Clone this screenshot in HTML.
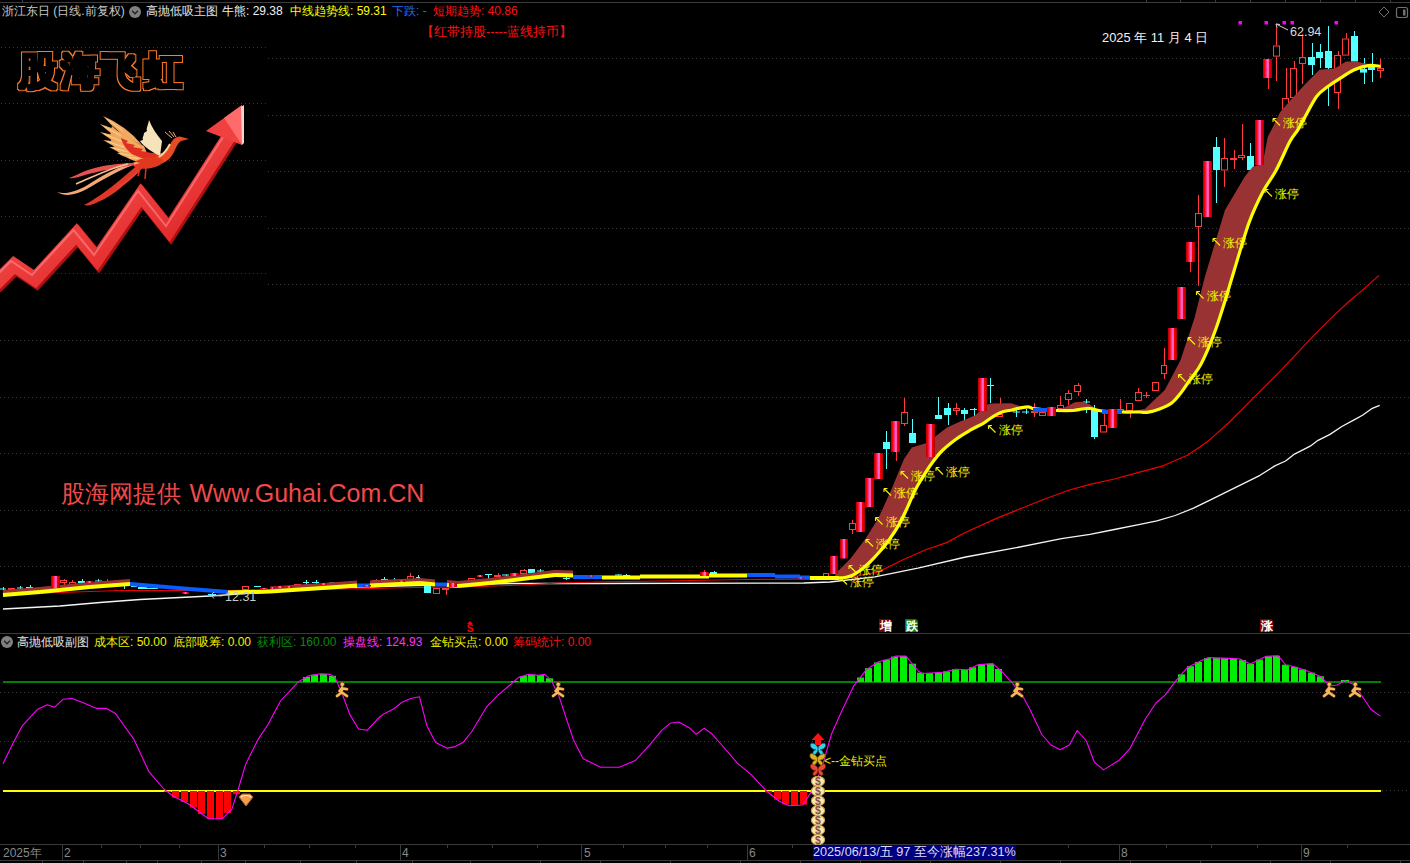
<!DOCTYPE html>
<html><head><meta charset="utf-8">
<style>
html,body{margin:0;padding:0;background:#000;width:1410px;height:863px;overflow:hidden;}
body{position:relative;font-family:"Liberation Sans", sans-serif;}
.t{position:absolute;white-space:nowrap;font-size:12px;line-height:14px;}
svg{position:absolute;left:0;top:0;}
</style></head><body>
<svg width="1410" height="863" viewBox="0 0 1410 863">
<rect x="0" y="2" width="1410" height="1" fill="#3c3c3c"/>
<rect x="22" y="0" width="1" height="2" fill="#3c3c3c"/>
<rect x="1146" y="0" width="1" height="2" fill="#3c3c3c"/>
<rect x="1180" y="0" width="1" height="2" fill="#3c3c3c"/>
<rect x="1215" y="0" width="1" height="2" fill="#3c3c3c"/>
<rect x="1250" y="0" width="1" height="2" fill="#3c3c3c"/>
<rect x="1285" y="0" width="1" height="2" fill="#3c3c3c"/>
<rect x="1320" y="0" width="1" height="2" fill="#3c3c3c"/>
<rect x="1355" y="0" width="1" height="2" fill="#3c3c3c"/>
<rect x="1390" y="0" width="1" height="2" fill="#3c3c3c"/>
<line x1="268" y1="58.5" x2="1410" y2="58.5" stroke="#3a3a3a" stroke-width="1" stroke-dasharray="1 3"/>
<line x1="268" y1="115.5" x2="1410" y2="115.5" stroke="#3a3a3a" stroke-width="1" stroke-dasharray="1 3"/>
<line x1="268" y1="171.5" x2="1410" y2="171.5" stroke="#3a3a3a" stroke-width="1" stroke-dasharray="1 3"/>
<line x1="268" y1="228.5" x2="1410" y2="228.5" stroke="#3a3a3a" stroke-width="1" stroke-dasharray="1 3"/>
<line x1="268" y1="284.5" x2="1410" y2="284.5" stroke="#3a3a3a" stroke-width="1" stroke-dasharray="1 3"/>
<line x1="0" y1="340.5" x2="1410" y2="340.5" stroke="#3a3a3a" stroke-width="1" stroke-dasharray="1 3"/>
<line x1="0" y1="397.5" x2="1410" y2="397.5" stroke="#3a3a3a" stroke-width="1" stroke-dasharray="1 3"/>
<line x1="0" y1="453.5" x2="1410" y2="453.5" stroke="#3a3a3a" stroke-width="1" stroke-dasharray="1 3"/>
<line x1="0" y1="510.5" x2="1410" y2="510.5" stroke="#3a3a3a" stroke-width="1" stroke-dasharray="1 3"/>
<line x1="0" y1="566.5" x2="1410" y2="566.5" stroke="#3a3a3a" stroke-width="1" stroke-dasharray="1 3"/>
<line x1="1" y1="47.5" x2="266" y2="47.5" stroke="#333333" stroke-width="1" stroke-dasharray="1 3"/>
<line x1="1" y1="103.5" x2="266" y2="103.5" stroke="#333333" stroke-width="1" stroke-dasharray="1 3"/>
<line x1="1" y1="160.5" x2="266" y2="160.5" stroke="#333333" stroke-width="1" stroke-dasharray="1 3"/>
<line x1="1" y1="216.5" x2="266" y2="216.5" stroke="#333333" stroke-width="1" stroke-dasharray="1 3"/>
<line x1="1" y1="273.5" x2="266" y2="273.5" stroke="#333333" stroke-width="1" stroke-dasharray="1 3"/>
<rect x="0" y="633" width="1410" height="1" fill="#3a3a3a"/>
<line x1="0" y1="692.5" x2="1410" y2="692.5" stroke="#3a3a3a" stroke-width="1" stroke-dasharray="1 3"/>
<line x1="0" y1="741.5" x2="1410" y2="741.5" stroke="#3a3a3a" stroke-width="1" stroke-dasharray="1 3"/>
<line x1="1382" y1="790.5" x2="1410" y2="790.5" stroke="#3a3a3a" stroke-width="1" stroke-dasharray="1 3"/>
<rect x="3" y="681" width="1378" height="2" fill="#008000"/>
<rect x="3" y="790" width="1378" height="2" fill="#ffff00"/>
<rect x="0" y="844" width="1410" height="1" fill="#3a3a3a"/>
<rect x="0" y="860" width="1410" height="1" fill="#3a3a3a"/>
<rect x="62" y="844" width="1" height="17" fill="#3a3a3a"/>
<rect x="218" y="844" width="1" height="17" fill="#3a3a3a"/>
<rect x="400" y="844" width="1" height="17" fill="#3a3a3a"/>
<rect x="581" y="844" width="1" height="17" fill="#3a3a3a"/>
<rect x="747" y="844" width="1" height="17" fill="#3a3a3a"/>
<rect x="1119" y="844" width="1" height="17" fill="#3a3a3a"/>
<rect x="1301" y="844" width="1" height="17" fill="#3a3a3a"/>
<rect x="140" y="845" width="1" height="3" fill="#3a3a3a"/>
<rect x="179" y="845" width="1" height="3" fill="#3a3a3a"/>
<rect x="264" y="845" width="1" height="3" fill="#3a3a3a"/>
<rect x="309" y="845" width="1" height="3" fill="#3a3a3a"/>
<rect x="355" y="845" width="1" height="3" fill="#3a3a3a"/>
<rect x="447" y="845" width="1" height="3" fill="#3a3a3a"/>
<rect x="492" y="845" width="1" height="3" fill="#3a3a3a"/>
<rect x="537" y="845" width="1" height="3" fill="#3a3a3a"/>
<rect x="623" y="845" width="1" height="3" fill="#3a3a3a"/>
<rect x="665" y="845" width="1" height="3" fill="#3a3a3a"/>
<rect x="707" y="845" width="1" height="3" fill="#3a3a3a"/>
<rect x="792" y="845" width="1" height="3" fill="#3a3a3a"/>
<rect x="1068" y="845" width="1" height="3" fill="#3a3a3a"/>
<rect x="1166" y="845" width="1" height="3" fill="#3a3a3a"/>
<rect x="1211" y="845" width="1" height="3" fill="#3a3a3a"/>
<rect x="1257" y="845" width="1" height="3" fill="#3a3a3a"/>
<rect x="1347" y="845" width="1" height="3" fill="#3a3a3a"/>
<rect x="101" y="845" width="1" height="3" fill="#3a3a3a"/>
<rect x="42" y="861" width="1" height="2" fill="#3a3a3a"/>
<rect x="83" y="861" width="1" height="2" fill="#3a3a3a"/>
<rect x="126" y="861" width="1" height="2" fill="#3a3a3a"/>
<rect x="157" y="861" width="1" height="2" fill="#3a3a3a"/>
<rect x="201" y="861" width="1" height="2" fill="#3a3a3a"/>
<rect x="245" y="861" width="1" height="2" fill="#3a3a3a"/>
<rect x="300" y="861" width="1" height="2" fill="#3a3a3a"/>
<rect x="356" y="861" width="1" height="2" fill="#3a3a3a"/>
<rect x="412" y="861" width="1" height="2" fill="#3a3a3a"/>
<rect x="470" y="861" width="1" height="2" fill="#3a3a3a"/>
<rect x="540" y="861" width="1" height="2" fill="#3a3a3a"/>
<rect x="600" y="861" width="1" height="2" fill="#3a3a3a"/>
<rect x="670" y="861" width="1" height="2" fill="#3a3a3a"/>
<rect x="740" y="861" width="1" height="2" fill="#3a3a3a"/>
<rect x="800" y="861" width="1" height="2" fill="#3a3a3a"/>
<rect x="860" y="861" width="1" height="2" fill="#3a3a3a"/>
<rect x="930" y="861" width="1" height="2" fill="#3a3a3a"/>
<rect x="1000" y="861" width="1" height="2" fill="#3a3a3a"/>
<rect x="1060" y="861" width="1" height="2" fill="#3a3a3a"/>
<rect x="1130" y="861" width="1" height="2" fill="#3a3a3a"/>
<rect x="1200" y="861" width="1" height="2" fill="#3a3a3a"/>
<rect x="1270" y="861" width="1" height="2" fill="#3a3a3a"/>
<rect x="1330" y="861" width="1" height="2" fill="#3a3a3a"/>
<rect x="1400" y="861" width="1" height="2" fill="#3a3a3a"/>
<defs><linearGradient id="lg1" x1="0" y1="0" x2="0" y2="1"><stop offset="0" stop-color="#ff9a60"/><stop offset="1" stop-color="#ff6a00"/></linearGradient><linearGradient id="ag" x1="0" y1="0" x2="1" y2="1"><stop offset="0" stop-color="#ff6060"/><stop offset="1" stop-color="#d81818"/></linearGradient><linearGradient id="pg" x1="0" y1="0" x2="1" y2="0"><stop offset="0" stop-color="#f08040"/><stop offset="0.5" stop-color="#e83a20"/><stop offset="1" stop-color="#f8c080"/></linearGradient></defs>
<filter id="ring" x="-10%" y="-30%" width="120%" height="160%"><feMorphology in="SourceAlpha" operator="dilate" radius="2.6" result="a"/><feMorphology in="SourceAlpha" operator="dilate" radius="1.5" result="b"/><feComposite in="a" in2="b" operator="out" result="r"/><feFlood flood-color="#ff7a2a"/><feComposite in2="r" operator="in"/></filter>
<text x="19" y="84" font-size="38" letter-spacing="3.5" fill="#fff" filter="url(#ring)">股海飞虹</text>
<path d="M-6,285 L14,265 L35,279 L76.5,234 L97,259 L141,195 L169,230 L230,135" fill="none" stroke="#b01010" stroke-width="15" stroke-linejoin="miter" transform="translate(1.5,2)"/>
<path d="M-6,285 L14,265 L35,279 L76.5,234 L97,259 L141,195 L169,230 L230,135" fill="none" stroke="url(#ag)" stroke-width="14" stroke-linejoin="miter"/>
<path d="M-6,285 L14,265 L35,279 L76.5,234 L97,259 L141,195 L169,230 L230,135" fill="none" stroke="#ff8a8a" stroke-width="2" stroke-linejoin="miter" transform="translate(-3,-4)" opacity="0.6"/>
<polygon points="242,105 206,131 242,145" fill="#f04040"/>
<polygon points="242,105 224,118 242,145" fill="#ff6a6a"/>
<polygon points="241,107 242,145 244,143 244,105" fill="#ffd0d0"/>
<g><path d="M112,126 C120,134 132,140 144,146 L150,160 C140,160 128,158 118,152 C112,146 108,138 112,126 Z" fill="#f0a058"/><path d="M103,116 Q118.9,135.3 142,145 Q126.1,125.7 103,116 Z" fill="#f2aa60"/><path d="M106.9,118.9 L122.5,130.5" stroke="#f9d49a" stroke-width="1" fill="none"/><path d="M100,124 Q118.0,141.2 142,148 Q124.0,130.8 100,124 Z" fill="#f2aa60"/><path d="M104.2,126.4 L121.0,136.0" stroke="#f9d49a" stroke-width="1" fill="none"/><path d="M100,132 Q119.1,147.0 143,151 Q123.9,136.0 100,132 Z" fill="#f2aa60"/><path d="M104.3,133.9 L121.5,141.5" stroke="#f9d49a" stroke-width="1" fill="none"/><path d="M103,140 Q122.1,152.7 145,154 Q125.9,141.3 103,140 Z" fill="#f2aa60"/><path d="M107.2,141.4 L124.0,147.0" stroke="#f9d49a" stroke-width="1" fill="none"/><path d="M109,147 Q126.5,157.8 147,157 Q129.5,146.2 109,147 Z" fill="#f2aa60"/><path d="M112.8,148.0 L128.0,152.0" stroke="#f9d49a" stroke-width="1" fill="none"/><path d="M117,153 Q131.9,161.9 149,159 Q134.1,150.1 117,153 Z" fill="#f2aa60"/><path d="M120.2,153.6 L133.0,156.0" stroke="#f9d49a" stroke-width="1" fill="none"/><path d="M126,157 Q137.8,164.5 151,160 Q139.2,152.5 126,157 Z" fill="#f2aa60"/><path d="M128.5,157.3 L138.5,158.5" stroke="#f9d49a" stroke-width="1" fill="none"/><path d="M121,138 L128,141 L126,143 L135,145 L133,147 L143,149 L141,151 L152,153 L163,153 L161,161 C150,161 140,158 132,154 C127,150 123,145 121,138 Z" fill="#e22e20"/><path d="M149,120 C148,126 146,128 147,131 L144,133 C144,136 142,137 143,140 L140,141 C144,147 152,152 160,156 L162,141 C157,135 152,128 149,120 Z" fill="#f7e3ba"/><path d="M155,157 C164,155 168,150 170,145 C172,140 175,137 180,136.5 L189,139 L181,141 C178,143 176,147 174,152 C170,160 164,164 154,166 Z" fill="#e84a22"/><path d="M159,157 C165,153 168,148 170,144" stroke="#f8d8a0" stroke-width="2" fill="none"/><path d="M172,138 L165,132 M174,137 L169,131 M176,137 L173,132" stroke="#f0b070" stroke-width="1" fill="none"/><ellipse cx="148" cy="163" rx="15" ry="5.5" transform="rotate(-8 148 163)" fill="#e03a1e"/><path d="M140,163 C120,168 100,182 85,190 C75,195 65,197 57,192 C66,195 76,191 86,186 C102,176 118,166 136,162 Z" fill="#f4a878"/><path d="M134,165 C115,168 100,171 85,175 C78,177 73,179 69,178 C75,176 82,172 88,170 C104,165 120,163 134,163 Z" fill="#e85050"/><path d="M142,167 C130,180 114,196 98,202 C92,205 88,206 84,205 C94,200 108,190 120,180 C128,173 134,168 138,165 Z" fill="#e03828"/><path d="M141,168 C134,176 126,183 116,188" stroke="#e84030" stroke-width="2" fill="none"/><path d="M128,164 C110,168 95,176 76,184" stroke="#f6c090" stroke-width="1.6" fill="none"/><path d="M140,168 L138,176 M146,168 L145,179" stroke="#e03020" stroke-width="1.5" fill="none"/></g>
<defs><linearGradient id="rg" x1="0" x2="1" y1="0" y2="0"><stop offset="0" stop-color="#b00000"/><stop offset="0.2" stop-color="#ff0000"/><stop offset="0.38" stop-color="#ff3080"/><stop offset="0.45" stop-color="#ff66cc"/><stop offset="0.6" stop-color="#ff66cc"/><stop offset="0.7" stop-color="#ff0000"/><stop offset="1" stop-color="#a00000"/></linearGradient></defs>
<polyline points="3.0,609.0 60.0,606.0 100.0,602.5 140.0,599.5 210.0,596.0 330.0,588.0 415.0,585.5 510.0,583.5 596.0,583.5 804.0,583.0 830.0,582.0 874.8,576.9 917.9,568.1 965.7,557.0 1013.6,548.2 1061.5,538.6 1090.0,534.3 1114.3,529.5 1138.7,524.6 1156.9,520.9 1175.2,515.5 1193.5,508.2 1211.5,499.4 1260.0,475.3 1274.8,465.9 1285.6,461.0 1294.5,454.1 1310.2,446.2 1318.1,440.3 1330.0,434.4 1341.8,426.5 1353.6,420.1 1362.5,415.2 1372.3,408.3 1379.7,405.3" fill="none" stroke="#f4f4f4" stroke-width="1.3" stroke-linejoin="round"/>
<polyline points="3.0,594.0 60.0,592.5 120.0,590.5 228.0,590.5 310.0,589.5 370.0,588.5 415.0,587.5 460.0,587.0 510.0,585.5 560.0,583.0 596.0,582.0 690.0,580.5 744.0,579.5 840.0,579.0 878.0,572.1 901.9,560.2 925.8,549.8 946.6,542.6 965.7,532.2 997.7,517.9 1021.6,508.3 1045.5,498.7 1069.5,490.0 1090.0,484.4 1114.3,479.0 1138.7,472.3 1163.0,465.8 1187.4,455.2 1199.5,447.3 1208.7,440.6 1229.0,422.5 1255.0,396.4 1280.0,371.4 1313.4,335.9 1332.2,317.1 1348.9,301.5 1361.4,291.1 1379.1,275.4" fill="none" stroke="#f00000" stroke-width="1.2" stroke-linejoin="round"/>
<rect x="852" y="520" width="1" height="3" fill="#ff3c3c"/><rect x="852" y="530" width="1" height="4" fill="#ff3c3c"/><rect x="849.5" y="523.5" width="6" height="6" fill="none" stroke="#ff3c3c" stroke-width="1"/>
<rect x="886" y="431" width="1" height="38" fill="#54ffff"/><rect x="883" y="442" width="7" height="7" fill="#54ffff"/>
<rect x="904" y="398" width="1" height="14" fill="#ff3c3c"/><rect x="904" y="424" width="1" height="2" fill="#ff3c3c"/><rect x="901.5" y="412.5" width="6" height="11" fill="none" stroke="#ff3c3c" stroke-width="1"/>
<rect x="912" y="419" width="1" height="24" fill="#54ffff"/><rect x="909" y="433" width="7" height="10" fill="#54ffff"/>
<rect x="938" y="397" width="1" height="22" fill="#54ffff"/><rect x="935" y="415" width="7" height="4" fill="#54ffff"/>
<rect x="948" y="403" width="1" height="22" fill="#54ffff"/><rect x="944" y="408" width="7" height="7" fill="#54ffff"/>
<rect x="956" y="403" width="1" height="5" fill="#ff3c3c"/><rect x="956" y="411" width="1" height="4" fill="#ff3c3c"/><rect x="953.5" y="408.5" width="6" height="2" fill="none" stroke="#ff3c3c" stroke-width="1"/>
<rect x="964" y="408" width="1" height="13" fill="#54ffff"/><rect x="961" y="410" width="7" height="4" fill="#54ffff"/>
<rect x="974" y="408" width="1" height="8" fill="#54ffff"/><rect x="970" y="409" width="7" height="1" fill="#54ffff"/>
<rect x="990" y="378" width="1" height="25" fill="#54ffff"/><rect x="987" y="385" width="7" height="1" fill="#54ffff"/>
<rect x="1000" y="398" width="1" height="16" fill="#ff3c3c"/><rect x="996.5" y="414.5" width="6" height="2" fill="none" stroke="#ff3c3c" stroke-width="1"/>
<rect x="1016" y="410" width="1" height="7" fill="#54ffff"/><rect x="1013" y="411.5" width="7" height="1" fill="#54ffff"/>
<rect x="1026" y="409" width="1" height="5" fill="#54ffff"/><rect x="1022" y="411.5" width="7" height="1" fill="#54ffff"/>
<rect x="1034" y="403" width="1" height="8" fill="#ff3c3c"/><rect x="1034" y="413" width="1" height="4" fill="#ff3c3c"/><rect x="1031" y="411" width="7" height="2" fill="#ff3c3c"/>
<rect x="1039.5" y="412.5" width="6" height="3" fill="none" stroke="#ff3c3c" stroke-width="1"/>
<rect x="1060" y="396" width="1" height="9" fill="#ff3c3c"/><rect x="1057.5" y="405.5" width="6" height="3" fill="none" stroke="#ff3c3c" stroke-width="1"/>
<rect x="1068" y="390" width="1" height="3" fill="#ff3c3c"/><rect x="1068" y="400" width="1" height="5" fill="#ff3c3c"/><rect x="1065.5" y="393.5" width="6" height="6" fill="none" stroke="#ff3c3c" stroke-width="1"/>
<rect x="1078" y="383" width="1" height="2" fill="#ff3c3c"/><rect x="1078" y="392" width="1" height="4" fill="#ff3c3c"/><rect x="1074.5" y="385.5" width="6" height="6" fill="none" stroke="#ff3c3c" stroke-width="1"/>
<rect x="1086" y="399" width="1" height="14" fill="#54ffff"/><rect x="1083" y="401.5" width="7" height="1" fill="#54ffff"/>
<rect x="1094" y="405" width="1" height="34" fill="#54ffff"/><rect x="1091" y="410" width="7" height="27" fill="#54ffff"/>
<rect x="1104" y="412" width="1" height="13" fill="#ff3c3c"/><rect x="1100.5" y="425.5" width="6" height="6.5" fill="none" stroke="#ff3c3c" stroke-width="1"/>
<rect x="1120" y="399" width="1" height="10" fill="#ff3c3c"/><rect x="1120" y="412" width="1" height="2" fill="#ff3c3c"/><rect x="1117.5" y="409.5" width="6" height="2" fill="none" stroke="#ff3c3c" stroke-width="1"/>
<rect x="1130" y="411" width="1" height="7" fill="#ff3c3c"/><rect x="1126.5" y="403.5" width="6" height="7" fill="none" stroke="#ff3c3c" stroke-width="1"/>
<rect x="1138" y="388" width="1" height="4" fill="#ff3c3c"/><rect x="1135.5" y="392.5" width="6" height="8" fill="none" stroke="#ff3c3c" stroke-width="1"/>
<rect x="1146" y="392" width="1" height="3" fill="#ff3c3c"/><rect x="1146" y="396" width="1" height="2" fill="#ff3c3c"/><rect x="1143" y="395" width="7" height="1" fill="#ff3c3c"/>
<rect x="1152.5" y="382.5" width="6" height="8" fill="none" stroke="#ff3c3c" stroke-width="1"/>
<rect x="1164" y="348" width="1" height="17" fill="#ff3c3c"/><rect x="1164" y="374" width="1" height="5" fill="#ff3c3c"/><rect x="1161.5" y="365.5" width="5" height="8" fill="none" stroke="#ff3c3c" stroke-width="1"/>
<rect x="1198" y="195" width="1" height="18" fill="#ff3c3c"/><rect x="1198" y="227" width="1" height="59" fill="#ff3c3c"/><rect x="1195.5" y="213.5" width="6" height="13" fill="none" stroke="#ff3c3c" stroke-width="1"/>
<rect x="1216" y="137" width="1" height="66" fill="#54ffff"/><rect x="1213" y="147" width="7" height="23" fill="#54ffff"/>
<rect x="1224" y="138" width="1" height="20" fill="#ff3c3c"/><rect x="1224" y="170.5" width="1" height="16.5" fill="#ff3c3c"/><rect x="1221.5" y="158.5" width="6" height="11.5" fill="none" stroke="#ff3c3c" stroke-width="1"/>
<rect x="1234" y="150" width="1" height="8" fill="#ff3c3c"/><rect x="1234" y="160" width="1" height="9" fill="#ff3c3c"/><rect x="1230" y="158" width="7" height="2" fill="#ff3c3c"/>
<rect x="1242" y="124" width="1" height="31" fill="#ff3c3c"/><rect x="1242" y="158" width="1" height="2" fill="#ff3c3c"/><rect x="1238.5" y="155.5" width="6" height="2" fill="none" stroke="#ff3c3c" stroke-width="1"/>
<rect x="1250" y="143" width="1" height="27" fill="#54ffff"/><rect x="1247" y="156" width="7" height="14" fill="#54ffff"/>
<rect x="1276" y="28" width="1" height="17.5" fill="#ff3c3c"/><rect x="1276" y="56.6" width="1" height="24.4" fill="#ff3c3c"/><rect x="1273.5" y="46.0" width="6" height="10.100000000000001" fill="none" stroke="#ff3c3c" stroke-width="1"/>
<rect x="1286" y="68" width="1" height="30" fill="#ff3c3c"/><rect x="1282.5" y="98.5" width="6" height="10" fill="none" stroke="#ff3c3c" stroke-width="1"/>
<rect x="1294" y="61" width="1" height="7" fill="#ff3c3c"/><rect x="1290.5" y="68.5" width="6" height="29" fill="none" stroke="#ff3c3c" stroke-width="1"/>
<rect x="1302" y="34" width="1" height="23" fill="#ff3c3c"/><rect x="1302" y="64" width="1" height="20" fill="#ff3c3c"/><rect x="1299.5" y="57.5" width="6" height="6" fill="none" stroke="#ff3c3c" stroke-width="1"/>
<rect x="1312" y="43" width="1" height="32" fill="#54ffff"/><rect x="1308" y="57" width="7" height="8" fill="#54ffff"/>
<rect x="1320" y="44" width="1" height="24" fill="#54ffff"/><rect x="1316" y="52" width="7" height="6" fill="#54ffff"/>
<rect x="1328" y="26" width="1" height="80" fill="#54ffff"/><rect x="1325" y="51" width="7" height="17" fill="#54ffff"/>
<rect x="1338" y="51" width="1" height="4" fill="#ff3c3c"/><rect x="1338" y="93" width="1" height="16" fill="#ff3c3c"/><rect x="1334.5" y="55.5" width="6" height="37" fill="none" stroke="#ff3c3c" stroke-width="1"/>
<rect x="1346" y="33" width="1" height="5.5" fill="#ff3c3c"/><rect x="1342.5" y="39.0" width="6" height="16.1" fill="none" stroke="#ff3c3c" stroke-width="1"/>
<rect x="1354" y="31" width="1" height="30.5" fill="#54ffff"/><rect x="1351" y="36" width="7" height="25.5" fill="#54ffff"/>
<rect x="1364" y="58" width="1" height="26" fill="#54ffff"/><rect x="1360" y="69" width="7" height="3.5999999999999943" fill="#54ffff"/>
<rect x="1372" y="53" width="1" height="29" fill="#54ffff"/><rect x="1368" y="67" width="7" height="3" fill="#54ffff"/>
<rect x="1380" y="58.7" width="1" height="9.299999999999997" fill="#ff3c3c"/><rect x="1380" y="71" width="1" height="7" fill="#ff3c3c"/><rect x="1377.5" y="68.5" width="6" height="2" fill="none" stroke="#ff3c3c" stroke-width="1"/>
<rect x="3" y="587" width="1" height="5" fill="#54ffff"/><rect x="0" y="588.5" width="6" height="1" fill="#54ffff"/>
<rect x="8" y="588" width="7" height="2" fill="#ff3c3c"/>
<rect x="20" y="586" width="1" height="3" fill="#54ffff"/><rect x="17" y="587.5" width="6" height="1" fill="#54ffff"/>
<rect x="30" y="585" width="1" height="4" fill="#54ffff"/><rect x="26" y="587" width="7" height="1" fill="#54ffff"/>
<rect x="64" y="579" width="1" height="1" fill="#ff3c3c"/><rect x="64" y="583" width="1" height="2" fill="#ff3c3c"/><rect x="60.5" y="580.5" width="6" height="2" fill="none" stroke="#ff3c3c" stroke-width="1"/>
<rect x="72" y="580" width="1" height="2" fill="#ff3c3c"/><rect x="69.5" y="582.5" width="6" height="2" fill="none" stroke="#ff3c3c" stroke-width="1"/>
<rect x="82" y="579" width="1" height="4" fill="#54ffff"/><rect x="78" y="581" width="7" height="2" fill="#54ffff"/>
<rect x="98" y="579" width="1" height="4" fill="#54ffff"/><rect x="95" y="580.5" width="7" height="1" fill="#54ffff"/>
<rect x="107" y="579" width="1" height="2" fill="#ff3c3c"/><rect x="104" y="581" width="6" height="1" fill="#ff3c3c"/>
<rect x="116" y="581" width="1" height="1" fill="#54ffff"/><rect x="112" y="581" width="7" height="1" fill="#54ffff"/>
<rect x="124" y="585" width="1" height="4" fill="#54ffff"/><rect x="121" y="585" width="7" height="1" fill="#54ffff"/>
<rect x="134" y="586" width="1" height="1" fill="#54ffff"/><rect x="131" y="586" width="6" height="1" fill="#54ffff"/>
<rect x="142" y="587" width="1" height="2" fill="#54ffff"/><rect x="138" y="587" width="9" height="2" fill="#54ffff"/>
<rect x="152" y="588" width="1" height="1" fill="#54ffff"/><rect x="147" y="588" width="11" height="1" fill="#54ffff"/>
<rect x="212" y="594" width="1" height="1" fill="#54ffff"/><rect x="208" y="594" width="8" height="1" fill="#54ffff"/>
<rect x="242.5" y="586.5" width="6" height="3" fill="none" stroke="#ff3c3c" stroke-width="1"/>
<rect x="258" y="586" width="1" height="1" fill="#54ffff"/><rect x="254" y="586" width="7" height="1" fill="#54ffff"/>
<rect x="294.5" y="584.5" width="6" height="2" fill="none" stroke="#ff3c3c" stroke-width="1"/>
<rect x="306" y="580" width="1" height="6" fill="#54ffff"/><rect x="303" y="582" width="6" height="1" fill="#54ffff"/>
<rect x="316" y="580" width="1" height="6" fill="#54ffff"/><rect x="312" y="582" width="7" height="1" fill="#54ffff"/>
<rect x="332" y="582.5" width="1" height="1" fill="#54ffff"/><rect x="329" y="582.5" width="6" height="1" fill="#54ffff"/>
<rect x="342" y="583" width="1" height="1" fill="#54ffff"/><rect x="338" y="583" width="7" height="1" fill="#54ffff"/>
<rect x="376" y="579" width="1" height="1" fill="#ff3c3c"/><rect x="372.5" y="580.5" width="6" height="4" fill="none" stroke="#ff3c3c" stroke-width="1"/>
<rect x="384" y="577" width="1" height="5" fill="#54ffff"/><rect x="381" y="579" width="7" height="1" fill="#54ffff"/>
<rect x="394" y="578" width="1" height="5" fill="#54ffff"/><rect x="390" y="580" width="7" height="1" fill="#54ffff"/>
<rect x="410" y="573" width="1" height="3" fill="#ff3c3c"/><rect x="407.5" y="576.5" width="6" height="3.5" fill="none" stroke="#ff3c3c" stroke-width="1"/>
<rect x="418" y="575" width="1" height="4" fill="#54ffff"/><rect x="416" y="577" width="4" height="1" fill="#54ffff"/>
<rect x="428" y="586" width="1" height="7" fill="#54ffff"/><rect x="424" y="586" width="7" height="7" fill="#54ffff"/>
<rect x="433.5" y="588.5" width="6" height="5" fill="none" stroke="#ff3c3c" stroke-width="1"/>
<rect x="446" y="590" width="1" height="5" fill="#ff3c3c"/><rect x="442" y="588" width="7" height="2" fill="#ff3c3c"/>
<rect x="459" y="582.5" width="7" height="1.5" fill="#ff3c3c"/>
<rect x="468.5" y="578.5" width="6" height="3" fill="none" stroke="#ff3c3c" stroke-width="1"/>
<rect x="488" y="574" width="1" height="6" fill="#54ffff"/><rect x="485" y="574" width="7" height="1" fill="#54ffff"/>
<rect x="498" y="573" width="1" height="2" fill="#ff3c3c"/><rect x="494" y="575" width="7" height="2" fill="#ff3c3c"/>
<rect x="506" y="574.5" width="1" height="2.5" fill="#54ffff"/><rect x="502" y="574.5" width="7" height="1" fill="#54ffff"/>
<rect x="524" y="569" width="1" height="1" fill="#ff3c3c"/><rect x="520.5" y="570.5" width="6" height="3" fill="none" stroke="#ff3c3c" stroke-width="1"/>
<rect x="532" y="569" width="1" height="4" fill="#54ffff"/><rect x="528" y="569" width="7" height="4" fill="#54ffff"/>
<rect x="540" y="569" width="1" height="4" fill="#54ffff"/><rect x="537" y="570.5" width="7" height="1" fill="#54ffff"/>
<rect x="556" y="576" width="1" height="1" fill="#54ffff"/><rect x="553" y="576" width="7" height="1" fill="#54ffff"/>
<rect x="558" y="575.5" width="1" height="1" fill="#54ffff"/><rect x="554" y="575.5" width="7" height="1" fill="#54ffff"/>
<rect x="566" y="576" width="1" height="4" fill="#54ffff"/><rect x="563" y="578" width="7" height="1" fill="#54ffff"/>
<rect x="618" y="574.5" width="1" height="1" fill="#54ffff"/><rect x="615" y="574.5" width="7" height="1" fill="#54ffff"/>
<rect x="626" y="574" width="1" height="2" fill="#54ffff"/><rect x="623" y="575" width="7" height="1" fill="#54ffff"/>
<rect x="714" y="571" width="1" height="3" fill="#54ffff"/><rect x="710" y="572" width="7" height="2" fill="#54ffff"/>
<rect x="823.5" y="573.5" width="5" height="3" fill="none" stroke="#ff3c3c" stroke-width="1"/>
<polygon points="3,590 40,587 40,592 3,595" fill="#993333"/>
<polygon points="40,587 90,582 90,587 40,592" fill="#993333"/>
<polygon points="90,582 130,579 130,584 90,587" fill="#993333"/>
<polygon points="270,586.5 300,584.5 300,589.5 270,591.5" fill="#993333"/>
<polygon points="300,584.5 330,582.5 330,587.5 300,589.5" fill="#993333"/>
<polygon points="330,582.5 357,580.5 357,585.5 330,587.5" fill="#993333"/>
<polygon points="370,580.5 420,578 420,583 370,585.5" fill="#993333"/>
<polygon points="420,578 435,579.5 435,584.5 420,583" fill="#993333"/>
<polygon points="447,580 458,581 458,586 447,585" fill="#993333"/>
<polygon points="458,581 490,578 490,583 458,586" fill="#993333"/>
<polygon points="490,578 530,573 530,578 490,583" fill="#993333"/>
<polygon points="530,573 555,570 555,575 530,578" fill="#993333"/>
<polygon points="555,570 573,570.5 573,575.5 555,575" fill="#993333"/>
<polygon points="835.3,573.8 850.6,558.5 866.0,538.0 878.6,517.7 891.4,489.6 904.0,459.0 911.8,447.6 925.8,443.2 935.0,436.7 947.0,427.5 959.0,421.9 975.0,415.4 987.0,404.8 990.6,403.4 1011.3,403.3 1019.8,406.0 1026.2,407.6 1030.0,407.0 1030.0,407.4 1029.0,407.0 1022.0,407.6 1011.0,410.2 1002.7,411.7 993.4,416.3 984.1,422.8 970.2,430.2 956.3,439.0 942.4,450.5 932.4,462.5 922.6,477.3 914.7,491.0 906.8,508.8 899.0,524.6 889.0,540.0 879.3,552.0 869.0,563.0 859.5,571.0 852.0,575.5 845.0,577.5 839.0,578.0 835.3,578.0" fill="#993333"/>
<polygon points="1056.0,410.5 1064.5,407.6 1075.0,402.2 1082.6,401.7 1090.0,404.4 1094.0,407.6 1096.0,408.6 1096.0,409.8 1090.0,408.5 1082.0,409.0 1073.0,410.5 1056.0,410.5 1056.0,410.5" fill="#993333"/>
<polygon points="1128.0,412.0 1133.6,410.7 1144.8,409.0 1164.8,390.0 1180.4,360.4 1194.3,318.7 1204.8,277.0 1224.9,210.2 1244.7,176.8 1253.0,166.4 1262.5,164.3 1267.7,137.0 1272.3,128.2 1280.2,112.0 1290.3,100.4 1305.6,83.7 1319.5,69.8 1334.8,68.4 1346.0,61.5 1355.7,61.5 1365.4,63.5 1380.7,65.6 1380.7,66.3 1380.7,66.3 1368.2,65.6 1354.3,69.8 1340.4,78.2 1327.9,86.5 1316.8,96.2 1305.6,115.7 1298.0,129.6 1290.0,141.3 1276.0,170.5 1262.5,192.5 1249.0,222.7 1234.3,270.0 1225.7,298.7 1217.0,325.7 1208.3,348.3 1199.6,366.5 1189.0,381.3 1180.4,393.5 1171.7,403.0 1159.6,409.0 1147.0,412.3 1140.0,412.0 1128.0,412.0" fill="#993333"/>
<line x1="3" y1="595" x2="40" y2="592" stroke="#ffff00" stroke-width="4"/>
<line x1="40" y1="592" x2="90" y2="587" stroke="#ffff00" stroke-width="4"/>
<line x1="90" y1="587" x2="130" y2="584" stroke="#ffff00" stroke-width="4"/>
<line x1="130" y1="584" x2="160" y2="586.5" stroke="#0a5cff" stroke-width="4"/>
<line x1="160" y1="586.5" x2="190" y2="589" stroke="#0a5cff" stroke-width="4"/>
<line x1="190" y1="589" x2="228" y2="592" stroke="#0a5cff" stroke-width="4"/>
<line x1="228" y1="592.5" x2="270" y2="591.5" stroke="#ffff00" stroke-width="4"/>
<line x1="270" y1="591.5" x2="300" y2="589.5" stroke="#ffff00" stroke-width="4"/>
<line x1="300" y1="589.5" x2="330" y2="587.5" stroke="#ffff00" stroke-width="4"/>
<line x1="330" y1="587.5" x2="357" y2="585.5" stroke="#ffff00" stroke-width="4"/>
<line x1="357" y1="585.5" x2="370" y2="585.5" stroke="#0a5cff" stroke-width="4"/>
<line x1="370" y1="585.5" x2="420" y2="583" stroke="#ffff00" stroke-width="4"/>
<line x1="420" y1="583" x2="435" y2="584.5" stroke="#ffff00" stroke-width="4"/>
<line x1="435" y1="584.5" x2="447" y2="584.5" stroke="#0a5cff" stroke-width="4"/>
<line x1="447" y1="585" x2="458" y2="586" stroke="#ffff00" stroke-width="4"/>
<line x1="458" y1="586" x2="490" y2="583" stroke="#ffff00" stroke-width="4"/>
<line x1="490" y1="583" x2="530" y2="578" stroke="#ffff00" stroke-width="4"/>
<line x1="530" y1="578" x2="555" y2="575" stroke="#ffff00" stroke-width="4"/>
<line x1="555" y1="575" x2="573" y2="575.5" stroke="#ffff00" stroke-width="4"/>
<line x1="573" y1="577" x2="602" y2="577" stroke="#0a5cff" stroke-width="4"/>
<line x1="602" y1="577.5" x2="640" y2="577.5" stroke="#ffff00" stroke-width="4"/>
<line x1="640" y1="576.5" x2="709" y2="576.5" stroke="#ffff00" stroke-width="4"/>
<line x1="709" y1="575.5" x2="747" y2="575.5" stroke="#ffff00" stroke-width="4"/>
<line x1="747" y1="575" x2="775" y2="575" stroke="#0a5cff" stroke-width="4"/>
<line x1="775" y1="576.5" x2="800" y2="576.5" stroke="#0a5cff" stroke-width="4"/>
<line x1="800" y1="577.5" x2="810" y2="577.5" stroke="#0a5cff" stroke-width="4"/>
<line x1="810" y1="578" x2="839" y2="578" stroke="#ffff00" stroke-width="4"/>
<path d="M840,577.5 L847,584.5 M840,577.5 L840,581 M840,577.5 L843.5,577.5" stroke="#f4f400" stroke-width="1.1" fill="none"/>
<text x="850" y="585.5" font-size="12" fill="#f4f400">涨停</text>
<path d="M849,565.5 L856,572.5 M849,565.5 L849,569 M849,565.5 L852.5,565.5" stroke="#f4f400" stroke-width="1.1" fill="none"/>
<text x="859" y="573.5" font-size="12" fill="#f4f400">涨停</text>
<path d="M866,539.5 L873,546.5 M866,539.5 L866,543 M866,539.5 L869.5,539.5" stroke="#f4f400" stroke-width="1.1" fill="none"/>
<text x="876" y="547.5" font-size="12" fill="#f4f400">涨停</text>
<path d="M875.5,517.5 L882.5,524.5 M875.5,517.5 L875.5,521 M875.5,517.5 L879.0,517.5" stroke="#f4f400" stroke-width="1.1" fill="none"/>
<text x="885.5" y="525.5" font-size="12" fill="#f4f400">涨停</text>
<path d="M884,488.5 L891,495.5 M884,488.5 L884,492 M884,488.5 L887.5,488.5" stroke="#f4f400" stroke-width="1.1" fill="none"/>
<text x="894" y="496.5" font-size="12" fill="#f4f400">涨停</text>
<path d="M901,471.5 L908,478.5 M901,471.5 L901,475 M901,471.5 L904.5,471.5" stroke="#f4f400" stroke-width="1.1" fill="none"/>
<text x="911" y="479.5" font-size="12" fill="#f4f400">涨停</text>
<path d="M936,467.5 L943,474.5 M936,467.5 L936,471 M936,467.5 L939.5,467.5" stroke="#f4f400" stroke-width="1.1" fill="none"/>
<text x="946" y="475.5" font-size="12" fill="#f4f400">涨停</text>
<path d="M988.5,425.5 L995.5,432.5 M988.5,425.5 L988.5,429 M988.5,425.5 L992.0,425.5" stroke="#f4f400" stroke-width="1.1" fill="none"/>
<text x="998.5" y="433.5" font-size="12" fill="#f4f400">涨停</text>
<path d="M1178.5,374.5 L1185.5,381.5 M1178.5,374.5 L1178.5,378 M1178.5,374.5 L1182.0,374.5" stroke="#f4f400" stroke-width="1.1" fill="none"/>
<text x="1188.5" y="382.5" font-size="12" fill="#f4f400">涨停</text>
<path d="M1188,337.5 L1195,344.5 M1188,337.5 L1188,341 M1188,337.5 L1191.5,337.5" stroke="#f4f400" stroke-width="1.1" fill="none"/>
<text x="1198" y="345.5" font-size="12" fill="#f4f400">涨停</text>
<path d="M1196.5,291.5 L1203.5,298.5 M1196.5,291.5 L1196.5,295 M1196.5,291.5 L1200.0,291.5" stroke="#f4f400" stroke-width="1.1" fill="none"/>
<text x="1206.5" y="299.5" font-size="12" fill="#f4f400">涨停</text>
<path d="M1213,238.5 L1220,245.5 M1213,238.5 L1213,242 M1213,238.5 L1216.5,238.5" stroke="#f4f400" stroke-width="1.1" fill="none"/>
<text x="1223" y="246.5" font-size="12" fill="#f4f400">涨停</text>
<path d="M1265,189.5 L1272,196.5 M1265,189.5 L1265,193 M1265,189.5 L1268.5,189.5" stroke="#f4f400" stroke-width="1.1" fill="none"/>
<text x="1275" y="197.5" font-size="12" fill="#f4f400">涨停</text>
<path d="M1273,118.5 L1280,125.5 M1273,118.5 L1273,122 M1273,118.5 L1276.5,118.5" stroke="#f4f400" stroke-width="1.1" fill="none"/>
<text x="1283" y="126.5" font-size="12" fill="#f4f400">涨停</text>
<path d="M839.0,578.0 C840.0,577.9 842.8,577.9 845.0,577.5 C847.2,577.1 849.6,576.6 852.0,575.5 C854.4,574.4 856.7,573.1 859.5,571.0 C862.3,568.9 865.7,566.2 869.0,563.0 C872.3,559.8 876.0,555.8 879.3,552.0 C882.6,548.2 885.7,544.6 889.0,540.0 C892.3,535.4 896.0,529.8 899.0,524.6 C902.0,519.4 904.2,514.4 906.8,508.8 C909.4,503.2 912.1,496.2 914.7,491.0 C917.3,485.8 919.7,482.1 922.6,477.3 C925.5,472.6 929.1,467.0 932.4,462.5 C935.7,458.0 938.4,454.4 942.4,450.5 C946.4,446.6 951.7,442.4 956.3,439.0 C960.9,435.6 965.6,432.9 970.2,430.2 C974.8,427.5 980.2,425.1 984.1,422.8 C988.0,420.5 990.3,418.2 993.4,416.3 C996.5,414.4 999.8,412.7 1002.7,411.7 C1005.6,410.7 1007.8,410.9 1011.0,410.2 C1014.2,409.5 1019.0,408.1 1022.0,407.6 C1025.0,407.1 1027.2,406.8 1029.0,407.0 C1030.8,407.2 1030.0,408.1 1033.0,408.6 C1036.0,409.1 1043.2,409.7 1047.0,410.0 C1050.8,410.3 1051.7,410.4 1056.0,410.5 C1060.3,410.6 1068.7,410.8 1073.0,410.5 C1077.3,410.2 1079.2,409.3 1082.0,409.0 C1084.8,408.7 1086.7,408.2 1090.0,408.5 C1093.3,408.8 1096.7,410.4 1102.0,411.0 C1107.3,411.6 1115.7,411.8 1122.0,412.0 C1128.3,412.2 1135.8,411.9 1140.0,412.0 C1144.2,412.1 1143.7,412.8 1147.0,412.3 C1150.3,411.8 1155.5,410.6 1159.6,409.0 C1163.7,407.4 1168.2,405.6 1171.7,403.0 C1175.2,400.4 1177.5,397.1 1180.4,393.5 C1183.3,389.9 1185.8,385.8 1189.0,381.3 C1192.2,376.8 1196.4,372.0 1199.6,366.5 C1202.8,361.0 1205.4,355.1 1208.3,348.3 C1211.2,341.5 1214.1,334.0 1217.0,325.7 C1219.9,317.4 1222.8,308.0 1225.7,298.7 C1228.6,289.4 1230.4,282.7 1234.3,270.0 C1238.2,257.3 1244.3,235.6 1249.0,222.7 C1253.7,209.8 1258.0,201.2 1262.5,192.5 C1267.0,183.8 1271.4,179.0 1276.0,170.5 C1280.6,162.0 1286.3,148.1 1290.0,141.3 C1293.7,134.5 1295.4,133.9 1298.0,129.6 C1300.6,125.3 1302.5,121.3 1305.6,115.7 C1308.7,110.1 1313.1,101.1 1316.8,96.2 C1320.5,91.3 1324.0,89.5 1327.9,86.5 C1331.8,83.5 1336.0,81.0 1340.4,78.2 C1344.8,75.4 1349.7,71.9 1354.3,69.8 C1358.9,67.7 1363.8,66.2 1368.2,65.6 C1372.6,65.0 1378.6,66.2 1380.7,66.3" fill="none" stroke="#ffff00" stroke-width="3.2"/>
<rect x="1033" y="408" width="14" height="4" fill="#0a5cff"/>
<rect x="1102" y="410" width="6" height="4" fill="#0a5cff"/>
<rect x="1117" y="410" width="5" height="4" fill="#0a5cff"/>
<rect x="830" y="556" width="8" height="18" fill="url(#rg)"/>
<rect x="840" y="539" width="8" height="19.5" fill="url(#rg)"/>
<rect x="856" y="502" width="9" height="30" fill="url(#rg)"/>
<rect x="865" y="478" width="9" height="29" fill="url(#rg)"/>
<rect x="874" y="453" width="9" height="26" fill="url(#rg)"/>
<rect x="896" y="452" width="1" height="9" fill="#ff3030"/><rect x="891" y="421" width="9" height="31" fill="url(#rg)"/>
<rect x="926" y="424" width="9" height="33" fill="url(#rg)"/>
<rect x="978" y="378" width="9" height="33" fill="url(#rg)"/>
<rect x="1047" y="407" width="9" height="9" fill="url(#rg)"/>
<rect x="1108" y="409" width="9" height="19" fill="url(#rg)"/>
<rect x="1168" y="328" width="9" height="32" fill="url(#rg)"/>
<rect x="1177" y="287" width="9" height="32" fill="url(#rg)"/>
<rect x="1190" y="262" width="1" height="10" fill="#ff3030"/><rect x="1186" y="242" width="9" height="20" fill="url(#rg)"/>
<rect x="1203" y="161" width="9" height="56" fill="url(#rg)"/>
<rect x="1255" y="120" width="9" height="45" fill="url(#rg)"/>
<rect x="1268" y="78" width="1" height="11" fill="#ff3030"/><rect x="1263" y="59" width="9" height="19" fill="url(#rg)"/>
<rect x="51" y="576" width="9" height="12" fill="url(#rg)"/>
<rect x="86" y="581" width="7" height="2" fill="url(#rg)"/>
<rect x="182" y="592" width="7" height="2" fill="url(#rg)"/>
<rect x="260" y="588" width="8" height="1" fill="url(#rg)"/>
<rect x="270" y="587" width="5" height="2" fill="url(#rg)"/>
<rect x="276" y="586" width="8" height="2" fill="url(#rg)"/>
<rect x="286" y="586" width="6" height="2" fill="url(#rg)"/>
<rect x="320" y="583" width="7" height="2" fill="url(#rg)"/>
<rect x="363" y="585" width="8" height="1.5" fill="url(#rg)"/>
<rect x="398" y="580.5" width="7" height="1.5" fill="url(#rg)"/>
<rect x="449" y="583" width="8" height="4" fill="url(#rg)"/>
<rect x="477" y="575" width="6" height="2" fill="url(#rg)"/>
<rect x="510" y="573" width="9" height="3" fill="url(#rg)"/>
<rect x="588" y="575.5" width="6" height="1" fill="url(#rg)"/>
<rect x="704" y="570" width="1" height="2" fill="#ff3030"/><rect x="700" y="572" width="9" height="4" fill="url(#rg)"/>
<rect x="796" y="577.5" width="9" height="1" fill="url(#rg)"/>
<path d="M1276,24 L1288,30 M1276,24 L1277,28 M1276,24 L1280,24.5" stroke="#d0d0d0" stroke-width="1" fill="none"/>
<text x="1290" y="36" font-size="12.5" fill="#d8d8d8">62.94</text>
<path d="M211,595 L222,596 M211,595 L214,592 M211,595 L214,598.5" stroke="#c8c8c8" stroke-width="1" fill="none"/>
<text x="225" y="600.5" font-size="12.5" fill="#c8c8c8">12.31</text>
<rect x="1238.5" y="21" width="3.5" height="3.5" fill="#ff00ff"/>
<rect x="1264.5" y="21" width="3.5" height="3.5" fill="#ff00ff"/>
<rect x="1282.5" y="21" width="3.5" height="3.5" fill="#ff00ff"/>
<rect x="1290.5" y="21" width="3.5" height="3.5" fill="#ff00ff"/>
<rect x="1334.5" y="21" width="3.5" height="3.5" fill="#ff00ff"/>
<rect x="164" y="791" width="7" height="0.7" fill="#ff0000"/>
<rect x="172" y="791" width="7" height="6.6" fill="#ff0000"/>
<rect x="181" y="791" width="7" height="11.0" fill="#ff0000"/>
<rect x="190" y="791" width="7" height="16.5" fill="#ff0000"/>
<rect x="198" y="791" width="7" height="23.0" fill="#ff0000"/>
<rect x="207" y="791" width="7" height="27.8" fill="#ff0000"/>
<rect x="216" y="791" width="7" height="27.8" fill="#ff0000"/>
<rect x="224" y="791" width="7" height="21.9" fill="#ff0000"/>
<rect x="233" y="791" width="7" height="3.2" fill="#ff0000"/>
<rect x="303" y="677.0" width="7" height="5.0" fill="#00ee00"/>
<rect x="311" y="674.7" width="7" height="7.3" fill="#00ee00"/>
<rect x="320" y="673.9" width="7" height="8.1" fill="#00ee00"/>
<rect x="329" y="675.8" width="7" height="6.2" fill="#00ee00"/>
<rect x="511" y="681.0" width="7" height="1.0" fill="#00ee00"/>
<rect x="520" y="676.0" width="7" height="6.0" fill="#00ee00"/>
<rect x="528" y="674.7" width="7" height="7.3" fill="#00ee00"/>
<rect x="537" y="675.1" width="7" height="6.9" fill="#00ee00"/>
<rect x="546" y="678.3" width="7" height="3.7" fill="#00ee00"/>
<rect x="765" y="791" width="7" height="1.5" fill="#ff0000"/>
<rect x="774" y="791" width="7" height="8.6" fill="#ff0000"/>
<rect x="782" y="791" width="7" height="13.3" fill="#ff0000"/>
<rect x="791" y="791" width="7" height="14.5" fill="#ff0000"/>
<rect x="800" y="791" width="7" height="13.6" fill="#ff0000"/>
<rect x="857" y="677.5" width="7" height="4.5" fill="#00ee00"/>
<rect x="865" y="668.1" width="7" height="13.9" fill="#00ee00"/>
<rect x="874" y="662.5" width="7" height="19.5" fill="#00ee00"/>
<rect x="883" y="659.8" width="7" height="22.2" fill="#00ee00"/>
<rect x="891" y="656.6" width="7" height="25.4" fill="#00ee00"/>
<rect x="900" y="656.1" width="7" height="25.9" fill="#00ee00"/>
<rect x="909" y="663.7" width="7" height="18.3" fill="#00ee00"/>
<rect x="917" y="672.7" width="7" height="9.3" fill="#00ee00"/>
<rect x="926" y="673.1" width="7" height="8.9" fill="#00ee00"/>
<rect x="935" y="672.6" width="7" height="9.4" fill="#00ee00"/>
<rect x="943" y="671.4" width="7" height="10.6" fill="#00ee00"/>
<rect x="952" y="669.3" width="7" height="12.7" fill="#00ee00"/>
<rect x="961" y="669.7" width="7" height="12.3" fill="#00ee00"/>
<rect x="969" y="667.3" width="7" height="14.7" fill="#00ee00"/>
<rect x="978" y="664.5" width="7" height="17.5" fill="#00ee00"/>
<rect x="987" y="663.8" width="7" height="18.2" fill="#00ee00"/>
<rect x="995" y="669.0" width="7" height="13.0" fill="#00ee00"/>
<rect x="1178" y="674.3" width="7" height="7.7" fill="#00ee00"/>
<rect x="1187" y="666.2" width="7" height="15.8" fill="#00ee00"/>
<rect x="1195" y="661.9" width="7" height="20.1" fill="#00ee00"/>
<rect x="1204" y="658.0" width="7" height="24.0" fill="#00ee00"/>
<rect x="1213" y="657.9" width="7" height="24.1" fill="#00ee00"/>
<rect x="1221" y="658.2" width="7" height="23.8" fill="#00ee00"/>
<rect x="1230" y="658.6" width="7" height="23.4" fill="#00ee00"/>
<rect x="1239" y="660.1" width="7" height="21.9" fill="#00ee00"/>
<rect x="1247" y="663.9" width="7" height="18.1" fill="#00ee00"/>
<rect x="1256" y="659.6" width="7" height="22.4" fill="#00ee00"/>
<rect x="1265" y="656.2" width="7" height="25.8" fill="#00ee00"/>
<rect x="1273" y="655.8" width="7" height="26.2" fill="#00ee00"/>
<rect x="1282" y="664.7" width="7" height="17.3" fill="#00ee00"/>
<rect x="1291" y="666.8" width="7" height="15.2" fill="#00ee00"/>
<rect x="1299" y="669.4" width="7" height="12.6" fill="#00ee00"/>
<rect x="1308" y="672.7" width="7" height="9.3" fill="#00ee00"/>
<rect x="1317" y="676.3" width="7" height="5.7" fill="#00ee00"/>
<rect x="1341" y="680" width="8" height="2" fill="#00ee00"/>
<polyline points="3.0,763.7 12.4,744.4 22.3,725.8 37.2,709.6 47.2,704.7 54.6,707.2 63.3,699.2 72.0,698.5 81.9,702.2 96.8,708.4 106.7,708.4 115.4,713.4 124.1,725.8 134.0,739.4 148.9,771.7 163.8,789.0 173.7,796.5 188.6,804.0 208.5,818.8 222.1,818.8 232.0,808.9 238.3,789.0 245.7,764.2 258.1,739.4 268.0,724.5 280.5,701.0 297.8,682.3 307.8,676.1 320.2,673.7 330.1,674.4 335.0,677.4 342.5,694.7 349.9,714.6 358.6,729.0 367.3,730.2 379.7,717.0 384.7,713.4 393.4,709.1 402.0,702.2 410.7,698.5 419.4,696.7 426.9,725.8 435.6,742.4 446.7,748.1 454.2,746.9 462.9,742.6 471.5,732.0 486.4,707.2 498.8,694.3 508.8,686.0 518.7,677.4 528.6,674.4 538.6,675.4 544.8,674.4 551.0,679.9 558.4,694.7 573.3,739.4 583.2,758.8 600.6,767.2 619.2,767.2 635.4,760.5 650.2,744.4 661.4,730.7 670.1,723.3 678.8,722.0 690.0,728.3 696.1,734.3 704.3,728.1 712.3,734.3 722.2,745.5 737.1,762.9 752.0,775.3 765.6,790.2 779.3,801.3 789.2,805.8 802.9,805.0 811.5,791.4 821.5,769.1 831.4,734.3 841.3,712.0 853.7,685.9 866.2,669.8 878.6,661.8 891.0,658.6 895.9,656.1 905.9,656.1 918.3,671.0 922.0,673.5 943.1,672.3 955.5,669.3 967.9,669.8 977.8,664.8 992.7,663.6 1002.7,672.3 1012.6,683.4 1022.5,695.8 1030.0,709.5 1041.8,734.5 1051.0,745.0 1060.2,749.7 1069.4,745.0 1077.2,730.5 1086.4,741.0 1094.3,762.0 1103.5,769.9 1119.2,760.2 1129.7,748.9 1145.5,718.7 1156.0,703.0 1165.1,695.1 1177.0,679.4 1187.4,667.6 1200.6,661.0 1208.4,657.6 1229.4,658.4 1240.0,659.0 1250.4,664.1 1266.2,656.3 1278.0,655.7 1285.8,665.0 1292.4,666.2 1305.5,670.2 1321.3,676.7 1329.1,686.0 1337.0,685.0 1344.9,680.7 1354.0,684.6 1363.2,697.7 1371.1,709.5 1380.3,716.1" fill="none" stroke="#ff00ff" stroke-width="1.1" stroke-linejoin="round"/>
<g transform="translate(336,682)" fill="none" stroke-linecap="round" stroke-linejoin="round"><path d="M6,5.5 L5.6,10.5 M6.5,6.5 L11,7.2 M5.6,10.5 L1,14 M5.8,10.5 L11,14 M6,6 L3.5,9" stroke="#6a3010" stroke-width="3.4"/><circle cx="6.3" cy="2.3" r="2.3" fill="#f6bc5c" stroke="#6a3010" stroke-width="0.8"/><path d="M6,5.5 L5.6,10.5 M6.5,6.5 L11,7.2 M5.6,10.5 L1,14 M5.8,10.5 L11,14 M6,6 L3.5,9" stroke="#f6bc5c" stroke-width="2.3"/></g>
<g transform="translate(552,682)" fill="none" stroke-linecap="round" stroke-linejoin="round"><path d="M6,5.5 L5.6,10.5 M6.5,6.5 L11,7.2 M5.6,10.5 L1,14 M5.8,10.5 L11,14 M6,6 L3.5,9" stroke="#6a3010" stroke-width="3.4"/><circle cx="6.3" cy="2.3" r="2.3" fill="#f6bc5c" stroke="#6a3010" stroke-width="0.8"/><path d="M6,5.5 L5.6,10.5 M6.5,6.5 L11,7.2 M5.6,10.5 L1,14 M5.8,10.5 L11,14 M6,6 L3.5,9" stroke="#f6bc5c" stroke-width="2.3"/></g>
<g transform="translate(1011,682)" fill="none" stroke-linecap="round" stroke-linejoin="round"><path d="M6,5.5 L5.6,10.5 M6.5,6.5 L11,7.2 M5.6,10.5 L1,14 M5.8,10.5 L11,14 M6,6 L3.5,9" stroke="#6a3010" stroke-width="3.4"/><circle cx="6.3" cy="2.3" r="2.3" fill="#f6bc5c" stroke="#6a3010" stroke-width="0.8"/><path d="M6,5.5 L5.6,10.5 M6.5,6.5 L11,7.2 M5.6,10.5 L1,14 M5.8,10.5 L11,14 M6,6 L3.5,9" stroke="#f6bc5c" stroke-width="2.3"/></g>
<g transform="translate(1323,682)" fill="none" stroke-linecap="round" stroke-linejoin="round"><path d="M6,5.5 L5.6,10.5 M6.5,6.5 L11,7.2 M5.6,10.5 L1,14 M5.8,10.5 L11,14 M6,6 L3.5,9" stroke="#6a3010" stroke-width="3.4"/><circle cx="6.3" cy="2.3" r="2.3" fill="#f6bc5c" stroke="#6a3010" stroke-width="0.8"/><path d="M6,5.5 L5.6,10.5 M6.5,6.5 L11,7.2 M5.6,10.5 L1,14 M5.8,10.5 L11,14 M6,6 L3.5,9" stroke="#f6bc5c" stroke-width="2.3"/></g>
<g transform="translate(1349,682)" fill="none" stroke-linecap="round" stroke-linejoin="round"><path d="M6,5.5 L5.6,10.5 M6.5,6.5 L11,7.2 M5.6,10.5 L1,14 M5.8,10.5 L11,14 M6,6 L3.5,9" stroke="#6a3010" stroke-width="3.4"/><circle cx="6.3" cy="2.3" r="2.3" fill="#f6bc5c" stroke="#6a3010" stroke-width="0.8"/><path d="M6,5.5 L5.6,10.5 M6.5,6.5 L11,7.2 M5.6,10.5 L1,14 M5.8,10.5 L11,14 M6,6 L3.5,9" stroke="#f6bc5c" stroke-width="2.3"/></g>
<g transform="translate(238,794)"><path d="M1,3 L4,0 L12,0 L15,3 L8,12 Z" fill="#f0a050" stroke="#c06020" stroke-width="1"/><path d="M3,3 C5,1 11,1 13,3" stroke="#fff0d0" stroke-width="1.2" fill="none"/></g>
<g transform="translate(818,781.3)"><ellipse cx="0" cy="0" rx="6.6" ry="5" fill="#fbeaa8" stroke="#d0a050" stroke-width="1.1"/><text x="0" y="3.8" font-size="10.5" font-weight="bold" text-anchor="middle" fill="#8a4a40">$</text></g>
<g transform="translate(818,791.05)"><ellipse cx="0" cy="0" rx="6.6" ry="5" fill="#fbeaa8" stroke="#d0a050" stroke-width="1.1"/><text x="0" y="3.8" font-size="10.5" font-weight="bold" text-anchor="middle" fill="#8a4a40">$</text></g>
<g transform="translate(818,800.8)"><ellipse cx="0" cy="0" rx="6.6" ry="5" fill="#fbeaa8" stroke="#d0a050" stroke-width="1.1"/><text x="0" y="3.8" font-size="10.5" font-weight="bold" text-anchor="middle" fill="#8a4a40">$</text></g>
<g transform="translate(818,810.55)"><ellipse cx="0" cy="0" rx="6.6" ry="5" fill="#fbeaa8" stroke="#d0a050" stroke-width="1.1"/><text x="0" y="3.8" font-size="10.5" font-weight="bold" text-anchor="middle" fill="#8a4a40">$</text></g>
<g transform="translate(818,820.3)"><ellipse cx="0" cy="0" rx="6.6" ry="5" fill="#fbeaa8" stroke="#d0a050" stroke-width="1.1"/><text x="0" y="3.8" font-size="10.5" font-weight="bold" text-anchor="middle" fill="#8a4a40">$</text></g>
<g transform="translate(818,830.05)"><ellipse cx="0" cy="0" rx="6.6" ry="5" fill="#fbeaa8" stroke="#d0a050" stroke-width="1.1"/><text x="0" y="3.8" font-size="10.5" font-weight="bold" text-anchor="middle" fill="#8a4a40">$</text></g>
<g transform="translate(818,839.8)"><ellipse cx="0" cy="0" rx="6.6" ry="5" fill="#fbeaa8" stroke="#d0a050" stroke-width="1.1"/><text x="0" y="3.8" font-size="10.5" font-weight="bold" text-anchor="middle" fill="#8a4a40">$</text></g>
<g transform="translate(818,769.5)"><path d="M0,-1 C-2,-5 -7,-7 -7.5,-4 C-8,-1 -5,1 -2,1 C-5,2 -6,5 -4,6 C-2,6.5 -0.5,3 0,1.5 C0.5,3 2,6.5 4,6 C6,5 5,2 2,1 C5,1 8,-1 7.5,-4 C7,-7 2,-5 0,-1 Z" fill="#e84a30" stroke="#902010" stroke-width="0.7"/><path d="M0,-2 L0,3" stroke="#902010" stroke-width="1"/></g>
<g transform="translate(817.5,759)"><path d="M0,-1 C-2,-5 -7,-7 -7.5,-4 C-8,-1 -5,1 -2,1 C-5,2 -6,5 -4,6 C-2,6.5 -0.5,3 0,1.5 C0.5,3 2,6.5 4,6 C6,5 5,2 2,1 C5,1 8,-1 7.5,-4 C7,-7 2,-5 0,-1 Z" fill="#e0b020" stroke="#806010" stroke-width="0.7"/><path d="M0,-2 L0,3" stroke="#806010" stroke-width="1"/></g>
<g transform="translate(818,748.6)"><path d="M0,-1 C-2,-5 -7,-7 -7.5,-4 C-8,-1 -5,1 -2,1 C-5,2 -6,5 -4,6 C-2,6.5 -0.5,3 0,1.5 C0.5,3 2,6.5 4,6 C6,5 5,2 2,1 C5,1 8,-1 7.5,-4 C7,-7 2,-5 0,-1 Z" fill="#38d0e8" stroke="#106080" stroke-width="0.7"/><path d="M0,-2 L0,3" stroke="#106080" stroke-width="1"/></g>
<path d="M818,733 L824.5,740 L821,740 L821,745 L815,745 L815,740 L811.5,740 Z" fill="#ff1010"/>
<text x="824" y="765" font-size="12" fill="#e8e800">&lt;--金钻买点</text>
<circle cx="135" cy="12" r="6" fill="#808080"/>
<path d="M132,10.8 L135,13.8 L138,10.8" stroke="#202020" stroke-width="1.3" fill="none"/>
<circle cx="7" cy="642" r="6" fill="#808080"/>
<path d="M4,640.8 L7,643.8 L10,640.8" stroke="#202020" stroke-width="1.3" fill="none"/>
<polygon points="879,619 890,619 892,621 892,632 879,632" fill="#800000"/>
<text x="885.5" y="630" font-size="12" font-weight="bold" fill="#ffffff" text-anchor="middle">增</text>
<polygon points="905,619 916,619 918,621 918,632 905,632" fill="#008000"/>
<text x="911.5" y="630" font-size="12" font-weight="bold" fill="#ffffff" text-anchor="middle">跌</text>
<polygon points="1260,619 1271,619 1273,621 1273,632 1260,632" fill="#800000"/>
<text x="1266.5" y="630" font-size="12" font-weight="bold" fill="#ffffff" text-anchor="middle">涨</text>
<text x="470" y="632" font-size="10" font-weight="bold" fill="#ff0000" text-anchor="middle">S</text>
<polygon points="470,621 473,624 467,624" fill="#ff0000"/>
<path d="M1384,7 L1389,12 L1384,17 L1379,12 Z" fill="none" stroke="#707070" stroke-width="1"/>
<rect x="1396.5" y="7.5" width="11" height="10" rx="2" fill="none" stroke="#707070" stroke-width="1.2"/>
<rect x="1403" y="9.5" width="2.5" height="6" fill="#707070"/>
</svg>
<div class="t" style="left:2px;top:4px;color:#c8c8c8">浙江东日 (日线.前复权)</div>
<div class="t" style="left:146px;top:4px;color:#e0e0e0">高抛低吸主图</div>
<div class="t" style="left:222px;top:4px;color:#f0f0f0">牛熊: 29.38</div>
<div class="t" style="left:290px;top:4px;color:#ffff00">中线趋势线: 59.31</div>
<div class="t" style="left:392px;top:4px;color:#1e6cff">下跌: -</div>
<div class="t" style="left:433px;top:4px;color:#ff1010">短期趋势: 40.86</div>
<div class="t" style="left:421px;top:25px;color:#ff1010;font-size:12.6px">【红带持股-----蓝线持币】</div>
<div class="t" style="left:1102px;top:31px;color:#f0f0f0;font-size:12.9px">2025 年 11 月 4 日</div>
<div class="t" style="left:61px;top:480px;color:#f04a4a;font-size:24px;line-height:28px">股海网提供</div>
<div class="t" style="left:189.5px;top:479px;color:#f04a4a;font-size:25px;line-height:28px">Www.Guhai.Com.CN</div>
<div class="t" style="left:17px;top:635px;color:#e0e0e0">高抛低吸副图</div>
<div class="t" style="left:94px;top:635px;color:#f0f000">成本区: 50.00</div>
<div class="t" style="left:173px;top:635px;color:#f0f000">底部吸筹: 0.00</div>
<div class="t" style="left:257px;top:635px;color:#0a8a0a">获利区: 160.00</div>
<div class="t" style="left:343px;top:635px;color:#ff30ff">操盘线: 124.93</div>
<div class="t" style="left:430px;top:635px;color:#f0f000">金钻买点: 0.00</div>
<div class="t" style="left:513px;top:635px;color:#ff1010">筹码统计: 0.00</div>
<div class="t" style="left:3px;top:846px;color:#8a8a8a">2025年</div>
<div class="t" style="left:64px;top:846px;color:#8a8a8a">2</div>
<div class="t" style="left:220px;top:846px;color:#8a8a8a">3</div>
<div class="t" style="left:402px;top:846px;color:#8a8a8a">4</div>
<div class="t" style="left:584px;top:846px;color:#8a8a8a">5</div>
<div class="t" style="left:749px;top:846px;color:#8a8a8a">6</div>
<div class="t" style="left:1121px;top:846px;color:#8a8a8a">8</div>
<div class="t" style="left:1303px;top:846px;color:#8a8a8a">9</div>
<div class="t" style="left:813px;top:845px;width:203px;height:15px;background:#000080;color:#dcdcf4;font-size:12.65px;line-height:15px;overflow:hidden">2025/06/13/五 97 至今涨幅237.31%</div>
</body></html>
